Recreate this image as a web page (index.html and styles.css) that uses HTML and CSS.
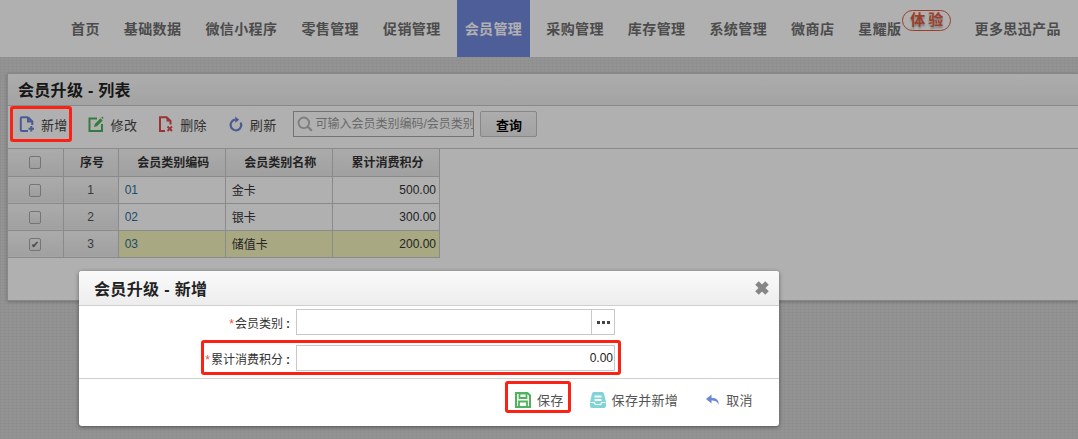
FILE: index.html
```html
<!DOCTYPE html>
<html lang="zh">
<head>
<meta charset="utf-8">
<title>会员升级</title>
<link rel="stylesheet" href="styles.css">
</head>
<body>
<header class="topnav">
  <a class="nav-item">首页</a>
  <a class="nav-item">基础数据</a>
  <a class="nav-item">微信小程序</a>
  <a class="nav-item">零售管理</a>
  <a class="nav-item">促销管理</a>
  <a class="nav-item active">会员管理</a>
  <a class="nav-item">采购管理</a>
  <a class="nav-item">库存管理</a>
  <a class="nav-item">系统管理</a>
  <a class="nav-item">微商店</a>
  <a class="nav-item star">星耀版<span class="badge">体验</span></a>
  <a class="nav-item">更多思迅产品</a>
</header>

<main class="page">
  <section class="panel">
    <h1 class="panel-title">会员升级 - 列表</h1>
    <div class="toolbar">
      <button class="tool tool-add">
        <svg class="ico" viewBox="0 0 16 16"><path d="M9 1.200H2.800a1 1 0 0 0-1 1v11.800a1 1 0 0 0 1 1H9M9 1.200l4.300 4.300V9M9 1.200V5.500h4.300" fill="none" stroke="#6d86d6" stroke-width="2"/><path d="M12.300 10v5.500M9.500 12.700h5.500" stroke="#6d86d6" stroke-width="2"/></svg>
        新增
      </button>
      <button class="tool tool-edit">
        <svg class="ico" viewBox="0 0 16 16"><path d="M9 2.500H1.500V15H14V8" fill="none" stroke="#4fb35a" stroke-width="2"/><path d="M6 11l.8-3 5.700-5.700 2.200 2.200L9 10.200z" fill="#4fb35a"/><path d="M13.300 1.500l.9-.9 1.500 1.500-.9.900z" fill="#4fb35a"/></svg>
        修改
      </button>
      <button class="tool tool-del">
        <svg class="ico" viewBox="0 0 16 16"><path d="M7 15H2V1.200h6.500L12.500 5v3.500" fill="none" stroke="#df4a4a" stroke-width="2"/><path d="M8.500 1.500V5.500h4" fill="#df4a4a"/><path d="M9.500 10.500l4.500 4.500M14 10.500L9.500 15" stroke="#df4a4a" stroke-width="1.800"/></svg>
        删除
      </button>
      <button class="tool tool-refresh">
        <svg class="ico" viewBox="0 0 16 16"><path d="M12.600 6.500a5.300 5.300 0 1 1-5.200-2.800" fill="none" stroke="#6d86d6" stroke-width="2.200"/><path d="M7.200 0.500l4 3.200-4 3z" fill="#6d86d6"/></svg>
        刷新
      </button>
      <label class="search">
        <svg class="search-ico" viewBox="0 0 16 16"><circle cx="6.800" cy="6.800" r="5.300" fill="none" stroke="#b5b5b5" stroke-width="1.800"/><path d="M10.800 10.800l4 4" stroke="#b5b5b5" stroke-width="2.200"/></svg>
        <input class="search-input" placeholder="可输入会员类别编码/会员类别名称">
      </label>
      <button class="query">查询</button>
    </div>
    <table class="grid">
      <thead>
        <tr>
          <th class="c-check"><span class="check"></span></th>
          <th class="c-num">序号</th>
          <th class="c-col">会员类别编码</th>
          <th class="c-col">会员类别名称</th>
          <th class="c-col">累计消费积分</th>
        </tr>
      </thead>
      <tbody>
        <tr>
          <td class="side"><span class="check"></span></td>
          <td class="side center">1</td>
          <td class="code">01</td>
          <td>金卡</td>
          <td class="right">500.00</td>
        </tr>
        <tr>
          <td class="side"><span class="check"></span></td>
          <td class="side center">2</td>
          <td class="code">02</td>
          <td>银卡</td>
          <td class="right">300.00</td>
        </tr>
        <tr class="selected">
          <td class="side"><span class="check on">✔</span></td>
          <td class="side center">3</td>
          <td class="code">03</td>
          <td>储值卡</td>
          <td class="right">200.00</td>
        </tr>
      </tbody>
    </table>
  </section>
</main>

<div class="mask"></div>

<section class="dialog">
  <div class="dialog-head">
    <h2 class="dialog-title">会员升级 - 新增</h2>
    <svg class="close" viewBox="0 0 16 16"><path d="M3 3l10 10M13 3L3 13" stroke="#868686" stroke-width="5"/></svg>
  </div>
  <form class="dialog-body">
    <div class="field">
      <label class="field-label"><i class="req">*</i>会员类别<b class="colon">:</b></label>
      <div class="input picker">
        <span class="picker-btn"><svg class="dots" viewBox="0 0 13 3"><path d="M0 0h3v3H0zM5 0h3v3H5zM10 0h3v3h-3z" fill="#444"/></svg></span>
      </div>
    </div>
    <div class="field">
      <label class="field-label"><i class="req">*</i>累计消费积分<b class="colon">:</b></label>
      <div class="input amount">0.00</div>
    </div>
  </form>
  <div class="dialog-foot">
    <button class="foot-btn btn-save">
      <svg class="ico" viewBox="0 0 16 16"><path d="M1 1h11.500L15 3.500V15H1z" fill="none" stroke="#4fb35a" stroke-width="2"/><path d="M4.500 1.500h7v4.500h-7zM4 9.500h8V15H4z" fill="none" stroke="#4fb35a" stroke-width="1.800"/></svg>
      保存
    </button>
    <button class="foot-btn btn-savenew">
      <svg class="ico" viewBox="0 0 16 16"><path d="M4 0h8a2 2 0 0 1 2 1.700L16 10v4a2 2 0 0 1-2 2H2a2 2 0 0 1-2-2v-4L2 1.700A2 2 0 0 1 4 0z" fill="#7fd4d8"/><path d="M4.500 3.500h7v2h-7zM4.500 7h7v2h-7z" fill="#fff"/><path d="M.5 10.500h3.800l1 2h5.400l1-2h3.800" fill="none" stroke="#fff" stroke-width="1.200"/></svg>
      保存并新增
    </button>
    <button class="foot-btn btn-cancel">
      <svg class="ico" viewBox="0 0 16 16"><path d="M6.500 2.500L1 7l5.500 4.500V8.600c3.300 0 5.800.6 7 4.400.8-4.700-2-7.200-7-7.300z" fill="#6d86d6"/></svg>
      取消
    </button>
  </div>
</section>

<div class="mark mark-add"></div>
<div class="mark mark-amount"></div>
<div class="mark mark-save"></div>
</body>
</html>
```

FILE: styles.css
```css
* { box-sizing: border-box; }

html, body {
  margin: 0;
  height: 439px;
  overflow: hidden;
}

body {
  position: relative;
  font-family: "Liberation Sans", "Noto Sans CJK SC", sans-serif;
  font-size: 12px;
  color: #333;
  background-color: #d6d6d6;
  background-image:
    repeating-linear-gradient(0deg, rgba(0,0,0,.025) 0 1px, transparent 1px 3px),
    repeating-linear-gradient(90deg, rgba(0,0,0,.025) 0 1px, transparent 1px 4px);
}

button {
  font: inherit;
  color: inherit;
  background: none;
  border: 0;
  padding: 0;
}

/* top navigation */
.topnav {
  display: flex;
  height: 57px;
  padding-left: 63px;
  gap: 8px;
  background: #fff;
}

.nav-item {
  display: flex;
  align-items: center;
  padding: 0 8px 2px;
  font-size: 14px;
  font-weight: 700;
  letter-spacing: .4px;
  color: #6e6e6e;
  white-space: nowrap;
}

.nav-item.active {
  color: #fff;
  background: #7288de;
}

.nav-item.star {
  position: relative;
  padding-right: 57px;
}

.badge {
  position: absolute;
  left: 52px;
  top: 10px;
  width: 49px;
  height: 21px;
  line-height: 18px;
  text-align: center;
  letter-spacing: 3px;
  text-indent: 3px;
  font-size: 15px;
  color: #e25a3c;
  border: 1px solid #e25a3c;
  border-radius: 11px;
  text-shadow: 0 2px 2px rgba(0,0,0,.3);
}

/* list panel */
.page {
  padding: 16px 0 0 7px;
}

.panel {
  height: 228px;
  background: #fff;
  border: 1px solid #c4c4c4;
  border-right: 0;
  box-shadow: 0 1px 3px rgba(0,0,0,.25);
}

.panel-title {
  margin: 0;
  height: 32px;
  padding-left: 10px;
  font-size: 16px;
  letter-spacing: .3px;
  line-height: 34px;
  color: #222;
  background: linear-gradient(#fafafa, #ededed);
  border-bottom: 1px solid #c9c9c9;
}

.toolbar {
  display: flex;
  align-items: center;
  height: 43px;
  padding: 0 0 6px 11px;
  border-bottom: 1px solid #c9c9c9;
}

.tool {
  display: flex;
  align-items: center;
  gap: 6px;
  font-size: 13px;
  letter-spacing: .3px;
  color: #444;
  white-space: nowrap;
}

.ico {
  flex: none;
  width: 16px;
  height: 16px;
}

.tool-add { margin-right: 20px; }
.tool-edit { margin-right: 21px; gap: 7px; }
.tool-del { margin-right: 21px; }
.tool-refresh { margin-right: 17px; }

.search {
  display: flex;
  align-items: center;
  gap: 1px;
  width: 181px;
  height: 26px;
  padding-left: 3px;
  overflow: hidden;
  background: #fff;
  border: 1px solid #a8a8a8;
}

.search-ico {
  flex: none;
  width: 16px;
  height: 16px;
}

.search-input {
  flex: 1;
  min-width: 0;
  padding: 0 0 0 1px;
  font: inherit;
  font-size: 12px;
  background: none;
  border: 0;
  outline: 0;
}

.search-input::placeholder {
  color: #999;
  opacity: 1;
}

.query {
  width: 57px;
  height: 26px;
  margin-left: 6px;
  font-size: 13px;
  font-weight: 700;
  color: #000;
  background: linear-gradient(#fafafa, #ececec);
  border: 1px solid #c4c4c4;
  border-radius: 2px;
}

/* table */
.grid {
  width: 432px;
  table-layout: fixed;
  border-collapse: collapse;
}

.grid th, .grid td {
  height: 27px;
  padding: 0 3px 0 6px;
  border: 1px solid #c9c9c9;
  font-size: 12px;
  white-space: nowrap;
}

.grid th:first-child, .grid td:first-child { border-left: 0; }
.grid thead th { border-top: 0; }

.grid th {
  padding-bottom: 1px;
  text-align: center;
  font-weight: 700;
  color: #333;
  background: linear-gradient(#f8f8f8, #e8e8e8);
}

.grid th.c-check, .grid td:first-child {
  padding: 0;
}

.c-check { width: 55px; }
.c-num { width: 55px; }
.c-col { width: 107px; }

.grid .side {
  text-align: center;
  background: linear-gradient(#f8f8f8, #e8e8e8);
}

.grid .center { padding: 0; color: #555; }
.grid .right { text-align: right; font-size: 12px; }
.code { color: #2a6f9e; }

.selected td:not(.side) { background: #f3f3bd; }

.check {
  display: inline-block;
  width: 12px;
  height: 13px;
  vertical-align: middle;
  font-size: 10px;
  line-height: 12px;
  color: #666;
  text-align: center;
  background: linear-gradient(#f5f5f5, #e4e4e4);
  border: 1px solid #aaa;
  border-radius: 2px;
}

/* modal */
.mask {
  position: absolute;
  inset: 0;
  background: rgba(0,0,0,.31);
}

.dialog {
  position: absolute;
  left: 79px;
  top: 271px;
  width: 700px;
  height: 155px;
  display: flex;
  flex-direction: column;
  background: #fff;
  border-radius: 3px;
  box-shadow: 0 1px 4px rgba(0,0,0,.45);
}

.dialog-head {
  display: flex;
  align-items: center;
  justify-content: space-between;
  height: 35px;
  padding: 0 9px 0 15px;
  background: linear-gradient(#fafafa, #ededed);
  border-bottom: 1px solid #cfcfcf;
  border-radius: 3px 3px 0 0;
}

.dialog-title {
  margin: 0;
  font-size: 16px;
  letter-spacing: .35px;
  color: #222;
}

.close {
  width: 16px;
  height: 16px;
}

.dialog-body {
  display: flex;
  flex-direction: column;
  gap: 10px;
  height: 73px;
  padding-top: 3px;
  border-bottom: 1px solid #cfcfcf;
}

.field {
  display: flex;
  align-items: center;
  height: 26px;
}

.field-label {
  width: 217px;
  padding-right: 6px;
  text-align: right;
  font-size: 12px;
  color: #333;
  white-space: nowrap;
}

.colon {
  margin-left: 3px;
  font-weight: 700;
}

.req {
  margin-right: 1px;
  color: #f44;
  font-style: normal;
}

.input {
  width: 319px;
  height: 26px;
  background: #fff;
  border: 1px solid #c8c8c8;
}

.picker {
  display: flex;
  justify-content: flex-end;
}

.picker-btn {
  display: flex;
  align-items: center;
  justify-content: center;
  width: 23px;
  height: 24px;
  border-left: 1px solid #c8c8c8;
}

.dots {
  width: 13px;
  height: 3px;
}

.amount {
  padding-right: 1px;
  text-align: right;
  font-size: 12px;
  line-height: 24px;
  color: #222;
}

.dialog-foot {
  flex: 1;
  display: flex;
  align-items: flex-start;
  padding: 11px 0 0 436px;
}

.foot-btn {
  display: flex;
  align-items: center;
  gap: 6px;
  font-size: 13px;
  letter-spacing: .3px;
  color: #555;
  white-space: nowrap;
}

.btn-save { margin-right: 26px; }
.btn-savenew { margin-right: 27px; }
.btn-cancel { gap: 5px; }

/* red annotation frames over the screenshot */
.mark {
  position: absolute;
  border: 3px solid #fb2115;
  border-radius: 3px;
}

.mark-add { left: 10px; top: 106px; width: 62px; height: 36px; }
.mark-amount { left: 201px; top: 340px; width: 420px; height: 35px; }
.mark-save { left: 505px; top: 381px; width: 66px; height: 32px; }
```
